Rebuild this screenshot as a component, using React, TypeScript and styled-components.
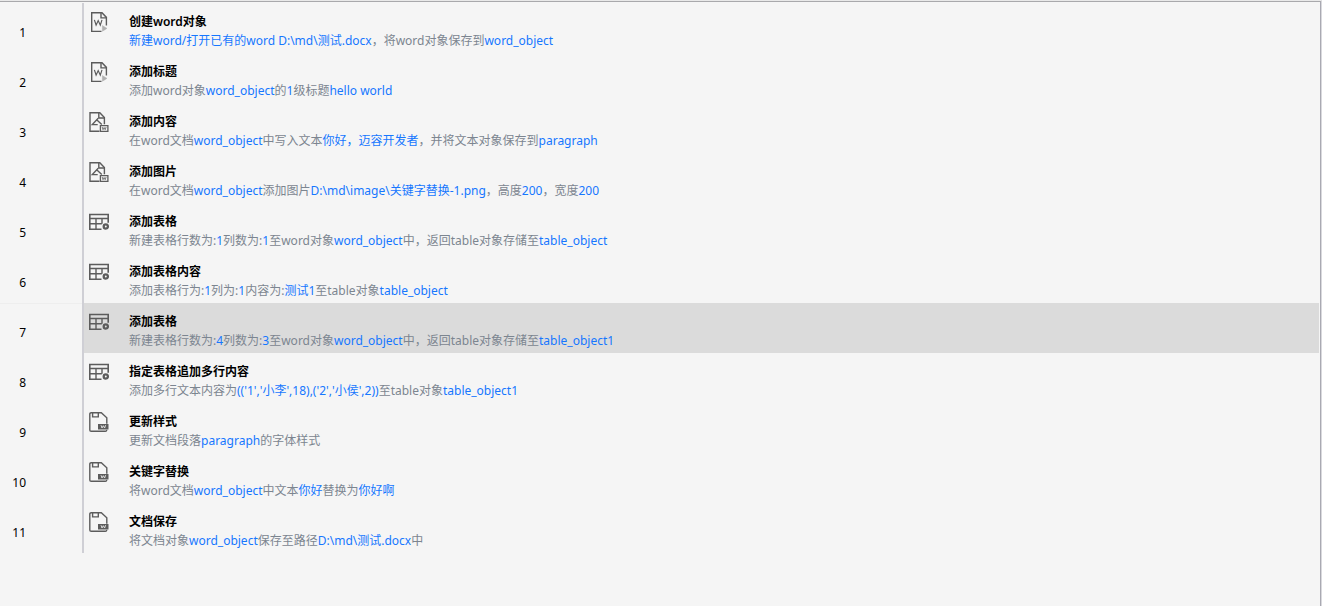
import React from "react";
import styled, { createGlobalStyle } from "styled-components";

const GlobalStyle = createGlobalStyle`
  * { box-sizing: border-box; }
  body {
    margin: 0;
    background: #f5f5f5;
    font-family: "Noto Sans", "Noto Sans CJK SC", sans-serif;
    font-size: 12px;
    color: #000;
  }
`;

const Panel = styled.main`
  min-height: 100vh;
  padding-top: 1px;
  border-top: 1px solid #e9e9e9;
  border-right: 1px solid #d9d9dd;
  background: #f5f5f5;
`;

const Frame = styled.div`
  min-height: calc(100vh - 1px);
  margin-top: -1px;
  padding: 1px 1px 0 0;
  border-top: 1px solid #a9a9ac;
  border-right: 1px solid #a9a9b2;
`;

const Steps = styled.ol`
  margin: 0;
  padding: 0;
  list-style: none;
`;

const Row = styled.li<{ $selected?: boolean }>`
  display: flex;
  height: 50px;
  --gutter-line: ${(p) => (p.$selected ? "#eeeeee" : "transparent")};
  --row-fill: ${(p) => (p.$selected ? "#dbdbdb" : "transparent")};
`;

const LineNumber = styled.div`
  flex: none;
  width: 82px;
  padding: 19px 56px 0 0;
  border-top: 1px solid var(--gutter-line);
  line-height: 19px;
  text-align: right;
`;

const Step = styled.div`
  display: flex;
  flex: 1;
  min-width: 0;
  gap: 20px;
  padding: 9px 0 0 5px;
  border-left: 2px solid #cfcfd5;
  background: var(--row-fill);
`;

const Icon = styled.svg`
  flex: none;
  width: 20px;
  height: 20px;
  fill: none;
  stroke: #5c5c5c;
  stroke-width: 1.4;
`;

const Copy = styled.div`
  min-width: 0;
  line-height: 19px;
  white-space: nowrap;
`;

const Title = styled.h2`
  margin: 0;
  font-size: 12px;
  font-weight: 600;
`;

const Description = styled.p`
  margin: 0;
  color: #7c8590;
`;

const Value = styled.span`
  color: #1677ff;
`;

type Kind = "word" | "content" | "table" | "save";

const StepIcon = ({ kind }: { kind: Kind }) => {
  if (kind === "word")
    return (
      <Icon viewBox="0 0 20 20" aria-hidden="true">
        <path d="M12.5 19.4H2.7V.7H13l4.4 4.7v8.2" />
        <path d="M12 .7v5.2h5.4" />
        <path d="M5.4 7.9l1.7 5.3 2.1-4.6 2.1 4.6L13 7.9" strokeWidth="1.2" />
        <path d="M13.4 13.6l4.6 2.8-4.6 2.8z" fill="#b0b0b0" stroke="#b0b0b0" strokeWidth=".5" />
      </Icon>
    );
  if (kind === "content")
    return (
      <Icon viewBox="0 0 20 20" aria-hidden="true">
        <path d="M10.5 19.3H1V.7h9.8l4.6 4.8v6.8" />
        <path d="M9.8.7V6h5.6" />
        <path d="M9.2 6.2L3.3 12.6h5.4M8.2 8.2l4.6 4.2" />
        <path d="M11.4 13.6h7.5v5.7h-7.5z" strokeWidth="1.3" />
        <path d="M13.2 15l.8 2.7 1.1-2.2 1.1 2.2.9-2.7" strokeWidth=".8" />
      </Icon>
    );
  if (kind === "table")
    return (
      <Icon viewBox="0 0 20 20" aria-hidden="true">
        <path d="M12.5 17.3H.8V2.5h18.4v8.3" strokeWidth="1.6" />
        <path d="M.8 6.5h18.4M.8 11.8h12M7 6.5v10.8M13 6.5v5.3" />
        <circle cx="16.8" cy="14.5" r="2.1" strokeWidth="2.3" />
      </Icon>
    );
  return (
    <Icon viewBox="0 0 20 20" aria-hidden="true">
      <path d="M17.8 11.8v-6L12.3.7H2.2Q.8.7.8 2v16q0 1.3 1.4 1.3h14.2q1.2 0 1.4-1.5" />
      <path d="M3.6.7v4.2h5.7V.7" />
      <path d="M9 12h10.5v5.5H9z" fill="#5c5c5c" stroke="none" />
      <path d="M12 13.2l1 2.8 1.3-2.3 1.3 2.3 1-2.8" stroke="#e8e8e8" strokeWidth=".9" />
    </Icon>
  );
};

// Values the user filled in are wrapped in braces and shown in blue.
const steps: { kind: Kind; title: string; text: string; selected?: boolean }[] = [
  { kind: "word", title: "创建word对象", text: "{新建word/打开已有的word D:\\md\\测试.docx}，将word对象保存到{word_object}" },
  { kind: "word", title: "添加标题", text: "添加word对象{word_object}的{1}级标题{hello world}" },
  { kind: "content", title: "添加内容", text: "在word文档{word_object}中写入文本{你好，迈容开发者}，并将文本对象保存到{paragraph}" },
  { kind: "content", title: "添加图片", text: "在word文档{word_object}添加图片{D:\\md\\image\\关键字替换-1.png}，高度{200}，宽度{200}" },
  { kind: "table", title: "添加表格", text: "新建表格行数为:{1}列数为:{1}至word对象{word_object}中，返回table对象存储至{table_object}" },
  { kind: "table", title: "添加表格内容", text: "添加表格行为:{1}列为:{1}内容为:{测试1}至table对象{table_object}" },
  { kind: "table", title: "添加表格", text: "新建表格行数为:{4}列数为:{3}至word对象{word_object}中，返回table对象存储至{table_object1}", selected: true },
  { kind: "table", title: "指定表格追加多行内容", text: "添加多行文本内容为{(('1','小李',18),('2','小侯',2))}至table对象{table_object1}" },
  { kind: "save", title: "更新样式", text: "更新文档段落{paragraph}的字体样式" },
  { kind: "save", title: "关键字替换", text: "将word文档{word_object}中文本{你好}替换为{你好啊}" },
  { kind: "save", title: "文档保存", text: "将文档对象{word_object}保存至路径{D:\\md\\测试.docx}中" },
];

const renderText = (text: string) =>
  text
    .split(/[{}]/)
    .map((part, i) => (i % 2 ? <Value key={i}>{part}</Value> : part));

export default function App() {
  return (
    <>
      <GlobalStyle />
      <Panel>
        <Frame>
          <Steps>
            {steps.map((step, i) => (
              <Row key={i} $selected={step.selected}>
                <LineNumber>{i + 1}</LineNumber>
                <Step>
                  <StepIcon kind={step.kind} />
                  <Copy>
                    <Title>{step.title}</Title>
                    <Description>{renderText(step.text)}</Description>
                  </Copy>
                </Step>
              </Row>
            ))}
          </Steps>
        </Frame>
      </Panel>
    </>
  );
}
